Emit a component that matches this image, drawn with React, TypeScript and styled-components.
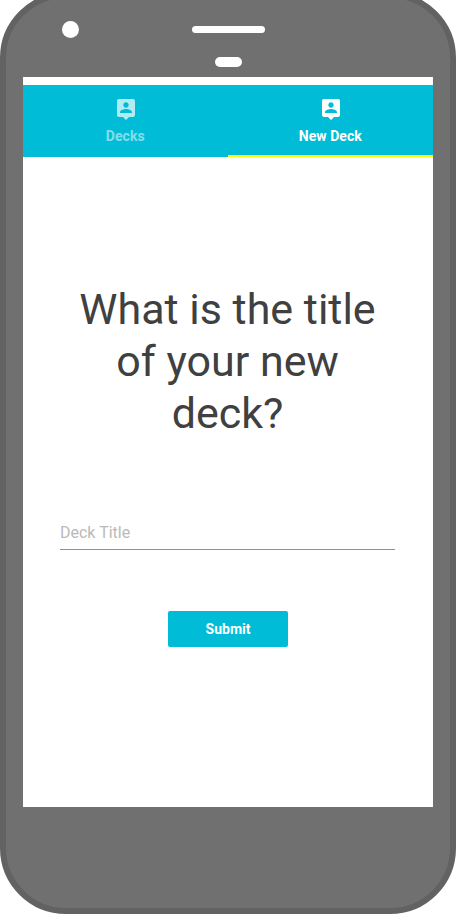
import React from 'react';
import styled, { createGlobalStyle } from 'styled-components';

const GlobalStyle = createGlobalStyle`
  *, *::before, *::after { box-sizing: border-box; }
  html, body { margin: 0; height: 100%; overflow: hidden; background: #fff; }
  body { font-family: Roboto, "Liberation Sans", sans-serif; }
`;

const Phone = styled.div`
  display: flex;
  flex-direction: column;
  width: 456px;
  height: 922px;
  margin-top: -8px;
  padding: 0 17px;
  border: 6px solid #626262;
  border-radius: 66px;
  background: #707070;
`;

const Hardware = styled.div`
  display: grid;
  grid-template-columns: 1fr 73px 1fr;
  grid-template-rows: 17px 10px;
  row-gap: 19px;
  align-items: center;
  align-content: start;
  height: 79px;
  padding-top: 23px;
  flex: none;
`;

const Camera = styled.span`
  width: 17px;
  height: 17px;
  margin-left: 39px;
  border-radius: 50%;
  background: #fff;
`;

const Speaker = styled.span`
  width: 73px;
  height: 7px;
  border-radius: 4px;
  background: #fff;
`;

const Sensor = styled.span`
  grid-column: 2;
  justify-self: center;
  width: 27px;
  height: 10px;
  border-radius: 5px;
  background: #fff;
`;

const Screen = styled.main`
  display: flex;
  flex-direction: column;
  flex: none;
  height: 730px;
  padding-top: 8px;
  background: #fff;
`;

const TabBar = styled.nav`
  display: grid;
  grid-template-columns: 1fr 1fr;
  height: 72px;
  background: #00bcd7;
`;

const Tab = styled.button<{ $active?: boolean }>`
  display: flex;
  flex-direction: column;
  align-items: center;
  padding: 12px 0 0;
  border: 0;
  border-bottom: 2px solid ${({ $active }) => ($active ? '#ffff00' : 'transparent')};
  background: none;
  color: #fff;
  font: 700 14px/16px Roboto, "Liberation Sans", sans-serif;
`;

const TabIcon = styled.svg<{ $active?: boolean }>`
  display: block;
  width: 24px;
  height: 24px;
  margin-left: 1px;
  fill: currentColor;
  opacity: ${({ $active }) => ($active ? 1 : 0.7)};
`;

const TabLabel = styled.span<{ $active?: boolean }>`
  margin: 7px 0.5px 0 0;
  letter-spacing: 0.06px;
  opacity: ${({ $active }) => ($active ? 1 : 0.5)};
`;

const Form = styled.form`
  display: flex;
  flex-direction: column;
  align-items: center;
  padding: 126px 38px 0 37px;
`;

const Title = styled.h1`
  margin: 0;
  color: #404040;
  font-size: 43px;
  font-weight: 400;
  line-height: 52px;
  text-align: center;
`;

const TitleInput = styled.input`
  width: 335px;
  height: 35px;
  margin-top: 76px;
  padding: 0;
  border: 0;
  border-bottom: 1px solid #919191;
  outline: 0;
  background: transparent;
  color: #404040;
  font: 400 16px/20px Roboto, "Liberation Sans", sans-serif;
  &::placeholder { color: #bababa; opacity: 1; }
`;

const SubmitButton = styled.button`
  width: 120px;
  height: 36px;
  margin: 61px 0 0 1px;
  padding: 0;
  border: 0;
  border-radius: 2px;
  background: #00bcd7;
  color: #fff;
  font: 700 14px/36px Roboto, "Liberation Sans", sans-serif;
`;

const tabs = [
  { label: 'Decks', active: false },
  { label: 'New Deck', active: true },
];

export default function App() {
  return (
    <>
      <GlobalStyle />
      <Phone>
        <Hardware>
          <Camera />
          <Speaker />
          <Sensor />
        </Hardware>
        <Screen>
          <TabBar>
            {tabs.map(({ label, active }) => (
              <Tab key={label} $active={active}>
                <TabIcon $active={active} viewBox="0 0 24 24">
                  <path d="M19 2H5c-1.11 0-2 .9-2 2v14c0 1.1.89 2 2 2h4l3 3 3-3h4c1.1 0 2-.9 2-2V4c0-1.1-.9-2-2-2zm-7 3.3c1.49 0 2.7 1.21 2.7 2.7s-1.21 2.7-2.7 2.7S9.3 9.49 9.3 8s1.21-2.7 2.7-2.7zM18 16H6v-.9c0-2 4-3.1 6-3.1s6 1.1 6 3.1v.9z" />
                </TabIcon>
                <TabLabel $active={active}>{label}</TabLabel>
              </Tab>
            ))}
          </TabBar>
          <Form onSubmit={(event) => event.preventDefault()}>
            <Title>What is the title of your new deck?</Title>
            <TitleInput placeholder="Deck Title" aria-label="Deck Title" />
            <SubmitButton type="submit">Submit</SubmitButton>
          </Form>
        </Screen>
      </Phone>
    </>
  );
}
